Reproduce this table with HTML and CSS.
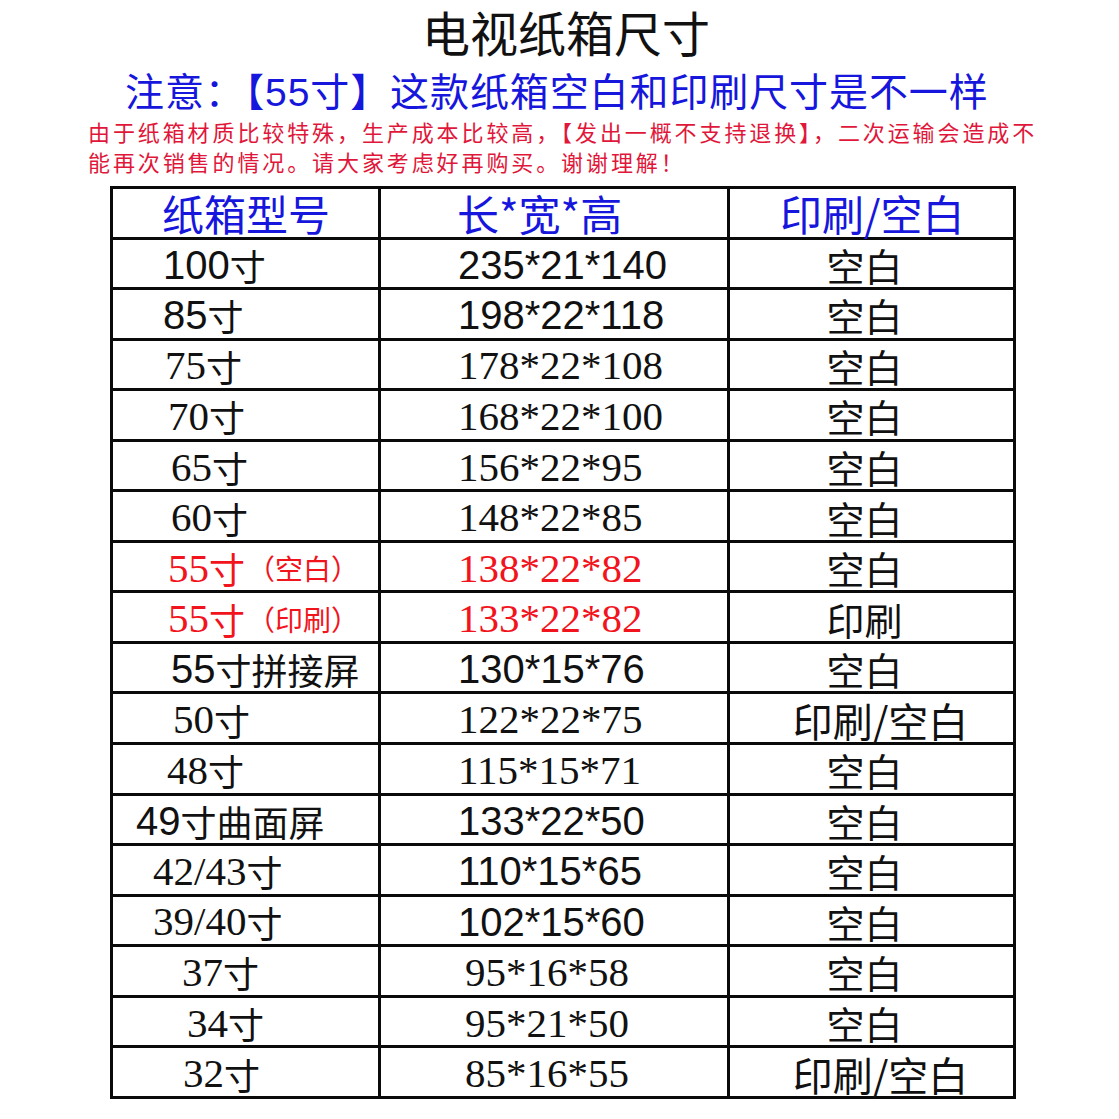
FILE: index.html
```html
<!DOCTYPE html>
<html lang="zh-CN">
<head>
<meta charset="utf-8">
<title>电视纸箱尺寸</title>
<link rel="stylesheet" href="styles.css">
</head>
<body>
<div class="page">
  <h1 class="title">电视纸箱尺寸</h1>
  <p class="notice">注意：【<span class="nd">55</span>寸】这款纸箱空白和印刷尺寸是不一样</p>
  <p class="warn">由于纸箱材质比较特殊，生产成本比较高，【发出一概不支持退换】，二次运输会造成不<br>能再次销售的情况。请大家考虑好再购买。谢谢理解！</p>

  <div class="sheet" role="table">
    <div class="cell head c1">纸箱型号</div>
    <div class="cell head c2">长*宽*高</div>
    <div class="cell head c3">印刷/空白</div>

    <div class="cell c1 sans p50"><span class="n">100</span>寸</div>
    <div class="cell c2 sans"><span class="n">235*21*140</span></div>
    <div class="cell c3">空白</div>

    <div class="cell c1 sans p50"><span class="n">85</span>寸</div>
    <div class="cell c2 sans"><span class="n">198*22*118</span></div>
    <div class="cell c3">空白</div>

    <div class="cell c1 serif p52"><span class="n">75</span>寸</div>
    <div class="cell c2 serif"><span class="n">178*22*108</span></div>
    <div class="cell c3">空白</div>

    <div class="cell c1 serif p55"><span class="n">70</span>寸</div>
    <div class="cell c2 serif"><span class="n">168*22*100</span></div>
    <div class="cell c3">空白</div>

    <div class="cell c1 serif p58"><span class="n">65</span>寸</div>
    <div class="cell c2 serif"><span class="n">156*22*95</span></div>
    <div class="cell c3">空白</div>

    <div class="cell c1 serif p58"><span class="n">60</span>寸</div>
    <div class="cell c2 serif"><span class="n">148*22*85</span></div>
    <div class="cell c3">空白</div>

    <div class="cell c1 serif p55 red"><span class="n">55</span>寸<span class="sub">（空白）</span></div>
    <div class="cell c2 serif red"><span class="n">138*22*82</span></div>
    <div class="cell c3">空白</div>

    <div class="cell c1 serif p55 red"><span class="n">55</span>寸<span class="sub">（印刷）</span></div>
    <div class="cell c2 serif red"><span class="n">133*22*82</span></div>
    <div class="cell c3">印刷</div>

    <div class="cell c1 sans p58"><span class="n">55</span>寸拼接屏</div>
    <div class="cell c2 sans"><span class="n">130*15*76</span></div>
    <div class="cell c3">空白</div>

    <div class="cell c1 serif p60"><span class="n">50</span>寸</div>
    <div class="cell c2 serif"><span class="n">122*22*75</span></div>
    <div class="cell c3 wide">印刷/空白</div>

    <div class="cell c1 serif p54"><span class="n">48</span>寸</div>
    <div class="cell c2 serif"><span class="n">115*15*71</span></div>
    <div class="cell c3">空白</div>

    <div class="cell c1 sans p23"><span class="n">49</span>寸曲面屏</div>
    <div class="cell c2 sans"><span class="n">133*22*50</span></div>
    <div class="cell c3">空白</div>

    <div class="cell c1 serif p40"><span class="n">42/43</span>寸</div>
    <div class="cell c2 sans"><span class="n">110*15*65</span></div>
    <div class="cell c3">空白</div>

    <div class="cell c1 serif p40"><span class="n">39/40</span>寸</div>
    <div class="cell c2 sans"><span class="n">102*15*60</span></div>
    <div class="cell c3">空白</div>

    <div class="cell c1 serif p69"><span class="n">37</span>寸</div>
    <div class="cell c2 serif shift"><span class="n">95*16*58</span></div>
    <div class="cell c3">空白</div>

    <div class="cell c1 serif p74"><span class="n">34</span>寸</div>
    <div class="cell c2 serif shift"><span class="n">95*21*50</span></div>
    <div class="cell c3">空白</div>

    <div class="cell c1 serif p70"><span class="n">32</span>寸</div>
    <div class="cell c2 serif shift"><span class="n">85*16*55</span></div>
    <div class="cell c3 wide">印刷/空白</div>
  </div>
</div>
</body>
</html>
```

FILE: styles.css
```css
html, body {
  margin: 0;
  padding: 0;
  background: #ffffff;
}

body {
  font-family: "Noto Sans CJK SC", "Liberation Sans", sans-serif;
  color: #111111;
}

.page {
  width: 1119px;
}

.title {
  margin: 0;
  padding: 0 0 0 13px;
  font-size: 48px;
  font-weight: 400;
  line-height: 62px;
  text-align: center;
  color: #111111;
}

.notice {
  margin: 4px 0 0;
  padding-left: 125px;
  font-size: 39px;
  line-height: 46px;
  letter-spacing: 0.9px;
  color: #1616dc;
  white-space: nowrap;
}

.notice .nd {
  font-family: "Liberation Sans", sans-serif;
}

.warn {
  margin: 0;
  padding-left: 88px;
  font-size: 22px;
  line-height: 30px;
  letter-spacing: 2.9px;
  color: #e0173a;
  white-space: nowrap;
}

.sheet {
  margin: 10px 0 0 110px;
  width: 906px;
  box-sizing: border-box;
  display: grid;
  grid-template-columns: 265px 346px 283px;
  grid-auto-rows: 47.55px;
  gap: 3px;
  padding: 3px;
  background: #0a0a0a;
}

.cell {
  background: #ffffff;
  display: flex;
  align-items: center;
  white-space: nowrap;
  font-size: 36px;
  line-height: 1;
  color: #111111;
  padding-top: 3px;
  box-sizing: border-box;
}

.cell.head {
  font-size: 42px;
  color: #1616dc;
  padding-top: 0;
}

.head.c1 { padding-left: 49px; }
.head.c2 { padding-left: 76px; }
.head.c3 { padding-left: 50px; justify-content: flex-start; }

.c2 { padding-left: 77px; }
.c2.shift { padding-left: 84px; }

.c3 {
  justify-content: center;
  padding-right: 14px;
  font-size: 38px;
}

.c3.wide {
  padding-right: 0;
  padding-left: 18px;
  font-size: 40px;
}

.sans .n {
  font-family: "Liberation Sans", sans-serif;
  font-size: 40px;
}

.serif .n {
  font-family: "Liberation Serif", serif;
  font-size: 41px;
}

.red {
  color: #f2141c;
}

.sub {
  font-size: 28px;
  margin-left: 2px;
}

.p23 { padding-left: 23px; }
.p40 { padding-left: 40px; }
.p50 { padding-left: 50px; }
.p52 { padding-left: 52px; }
.p54 { padding-left: 54px; }
.p55 { padding-left: 55px; }
.p58 { padding-left: 58px; }
.p60 { padding-left: 60px; }
.p69 { padding-left: 69px; }
.p70 { padding-left: 70px; }
.p74 { padding-left: 74px; }
```
